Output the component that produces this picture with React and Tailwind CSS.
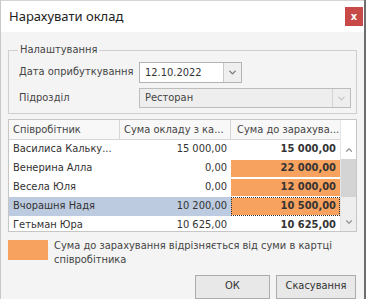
import { ChevronDown, ChevronUp } from "lucide-react";

const rows = [
  { name: "Василиса Кальку...", salary: "15 000,00", total: "15 000,00", diff: false },
  { name: "Венерина Алла", salary: "0,00", total: "22 000,00", diff: true },
  { name: "Весела Юля", salary: "0,00", total: "12 000,00", diff: true },
  { name: "Вчорашня Надя", salary: "10 200,00", total: "10 500,00", diff: true, selected: true },
  { name: "Гетьман Юра", salary: "10 625,00", total: "10 625,00", diff: false },
];

const font = { fontFamily: "'DejaVu Sans Condensed', 'DejaVu Sans', sans-serif" };

export default function App() {
  return (
    <div
      className="w-[366px] h-[299px] overflow-hidden bg-[#f4f4f4] border-l border-r-2 border-l-[#c8c8c8] border-r-[#6d6d6d] text-[11px] text-[#333]"
      style={font}
    >
      {/* title */}
      <div className="h-[32px] bg-white border-t border-[#d4d4d4] flex items-center justify-between pl-[8px] pr-[1px]">
        <span className="text-[13px] text-[#222]" style={{ fontFamily: "'Noto Sans', sans-serif" }}>
          Нарахувати оклад
        </span>
        <button className="w-[18px] h-[19px] bg-[#c74a48] text-white text-[11px] font-bold flex items-center justify-center leading-none">
          x
        </button>
      </div>

      <div className="px-[7px] pt-[10px]">
        <fieldset className="border border-[#cfcfcf] pl-[10px] pr-[5px] pb-[4px] pt-[0px]">
          <legend className="px-[2px] -ml-[1px] text-[#444]">Налаштування</legend>
          <div className="flex items-center h-[21px] mt-[3px]">
            <span className="w-[120px] text-[#444]">Дата оприбуткування</span>
            <div className="flex h-[21px] border border-[#b3b3b3] bg-white">
              <span className="w-[83px] pl-[5px] leading-[19px] text-[#333]">12.10.2022</span>
              <span className="w-[18px] border-l border-[#c8c8c8] bg-[#efefef] flex items-center justify-center">
                <ChevronDown size={11} strokeWidth={3} className="text-[#777]" />
              </span>
            </div>
          </div>
          <div className="flex items-center h-[21px] mt-[5px]">
            <span className="w-[120px] text-[#444]">Підрозділ</span>
            <div className="flex flex-1 h-[20px] border border-[#bdbdbd] bg-[#eeeeee]">
              <span className="flex-1 pl-[5px] leading-[18px] text-[#444]">Ресторан</span>
              <span className="w-[18px] border-l border-[#d4d4d4] flex items-center justify-center">
                <ChevronDown size={11} strokeWidth={2.5} className="text-[#c4c4c4]" />
              </span>
            </div>
          </div>
        </fieldset>

        {/* grid */}
        <div className="mt-[5px] h-[113px] border border-[#c6c6c6] bg-white flex overflow-hidden">
          <div className="flex-1">
            <div className="flex h-[20px] border-b border-[#d6d6d6] bg-[#f8f8f8] text-[#444]">
              <div className="w-[111px] pl-[4px] leading-[20px] border-r border-[#d6d6d6] truncate">Співробітник</div>
              <div className="w-[111px] pl-[4px] leading-[20px] border-r border-[#d6d6d6]">Сума окладу з ка...</div>
              <div className="flex-1 pl-[6px] leading-[20px]">Сума до зарахува...</div>
            </div>
            {rows.map((r) => (
              <div key={r.name} className={`flex h-[19px] ${r.selected ? "bg-[#bccbdf]" : ""}`}>
                <div className="w-[111px] pl-[4px] leading-[18px] truncate">{r.name}</div>
                <div className="w-[111px] pr-[4px] leading-[18px] text-right">{r.salary}</div>
                <div
                  className={`flex-1 pr-[4px] leading-[16px] text-right font-bold border-b border-t border-white ${
                    r.diff ? "bg-[#f7a25e]" : "bg-white"
                  } ${r.selected ? "outline-1 outline-dotted outline-[#333] -outline-offset-1" : ""}`}
                >
                  {r.total}
                </div>
              </div>
            ))}
          </div>
          {/* scrollbar */}
          <div className="w-[16px] border-l border-[#e4e4e4] bg-[#f0f0f0] flex flex-col">
            <div className="h-[39px] bg-white flex items-start justify-center pt-[25px]">
              <ChevronUp size={10} strokeWidth={3} className="text-[#999]" />
            </div>
            <div className="h-[38px] bg-[#d4d4d4]" />
            <div className="flex-1 bg-[#eeeeee] flex items-end justify-center pb-[4px]">
              <ChevronDown size={10} strokeWidth={3} className="text-[#999]" />
            </div>
          </div>
        </div>

        {/* legend */}
        <div className="flex mt-[8px] gap-[6px]">
          <div className="w-[40px] h-[20px] bg-[#f7a25e] shrink-0" />
          <p className="text-[#444] leading-[14px] -mt-[1px]">
            Сума до зарахування відрізняється від суми в картці співробітника
          </p>
        </div>

        <div className="flex justify-end gap-[6px] mt-[8px] pr-[1px]">
          <button className="w-[75px] h-[24px] border border-[#acacac] bg-[#e8e8e8] text-[#333]">ОК</button>
          <button className="w-[80px] h-[24px] border border-[#acacac] bg-[#e8e8e8] text-[#333]">Скасування</button>
        </div>
      </div>
    </div>
  );
}
